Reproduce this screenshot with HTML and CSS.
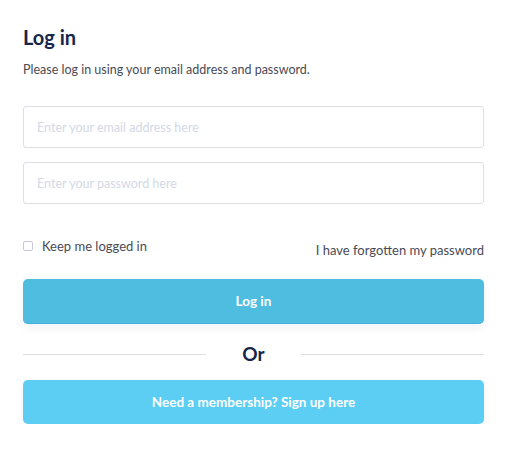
FILE: index.html
```html
<!DOCTYPE html>
<html lang="en">
<head>
    <meta charset="UTF-8">
    <meta name="viewport" content="width=device-width, initial-scale=1.0">
    <title>Log in</title>
    <link rel="stylesheet" href="styles.css">
</head>
<body>
    <main class="login">
        <h1>Log in</h1>
        <p class="intro">Please log in using your email address and password.</p>

        <form class="login-form">
            <input type="email" class="field" placeholder="Enter your email address here">
            <input type="password" class="field" placeholder="Enter your password here">

            <div class="options">
                <label class="remember">
                    <span class="box"></span>
                    Keep me logged in
                </label>
                <a href="#" class="forgot">I have forgotten my password</a>
            </div>

            <button type="button" class="btn btn-login">Log in</button>
        </form>

        <div class="divider"><span>Or</span></div>

        <button type="button" class="btn btn-signup">Need a membership? Sign up here</button>
    </main>
</body>
</html>
```

FILE: styles.css
```css
body {
    margin: 0;
    padding: 0;
    background: #fff;
    font-family: Lato, "Noto Sans", sans-serif;
    color: #4a4a55;
}

.login {
    padding: 24px 28px 0 23px;
}

h1 {
    margin: 0;
    font-size: 20px;
    line-height: 26px;
    font-weight: 700;
    color: #17264a;
}

.intro {
    margin: 11px 0 0;
    font-size: 12.5px;
    line-height: 18px;
}

.login-form {
    display: flex;
    flex-direction: column;
    margin-top: 27px;
}

.field {
    box-sizing: border-box;
    height: 42px;
    padding: 0 13px;
    margin-bottom: 14px;
    border: 1px solid #dedde8;
    border-radius: 3px;
    font-family: inherit;
    font-size: 12.5px;
    outline: none;
}

.field::placeholder {
    color: #d3d9e6;
}

.options {
    display: flex;
    justify-content: space-between;
    align-items: flex-start;
    margin-top: 18px;
    font-size: 13px;
}

.remember {
    display: flex;
    align-items: center;
    gap: 9px;
    padding-top: 1px;
    line-height: 18px;
}

.box {
    width: 8px;
    height: 8px;
    border: 1px solid #c9cad6;
    border-radius: 2px;
}

.forgot {
    margin-top: 5px;
    line-height: 18px;
    color: #4a4a55;
    text-decoration: none;
}

.btn {
    display: block;
    width: 100%;
    height: 44px;
    border: none;
    border-radius: 5px;
    font-family: inherit;
    font-size: 13.5px;
    font-weight: 700;
    color: #fff;
    box-shadow: 0 4px 10px rgba(30, 40, 80, 0.06);
    cursor: pointer;
}

.btn-login {
    height: 45px;
    margin-top: 20px;
    background: #4ebde0;
    border-bottom: 1px solid #3fb1d6;
}

.btn-signup {
    background: #5ccef3;
}

.divider {
    display: flex;
    align-items: center;
    margin: 18px 0 14px;
}

.divider::before,
.divider::after {
    content: "";
    flex: 1;
    height: 1px;
    background: #e0dfe8;
}

.divider span {
    width: 95px;
    text-align: center;
    font-size: 19px;
    font-weight: 700;
    line-height: 24px;
    color: #17264a;
}
```
